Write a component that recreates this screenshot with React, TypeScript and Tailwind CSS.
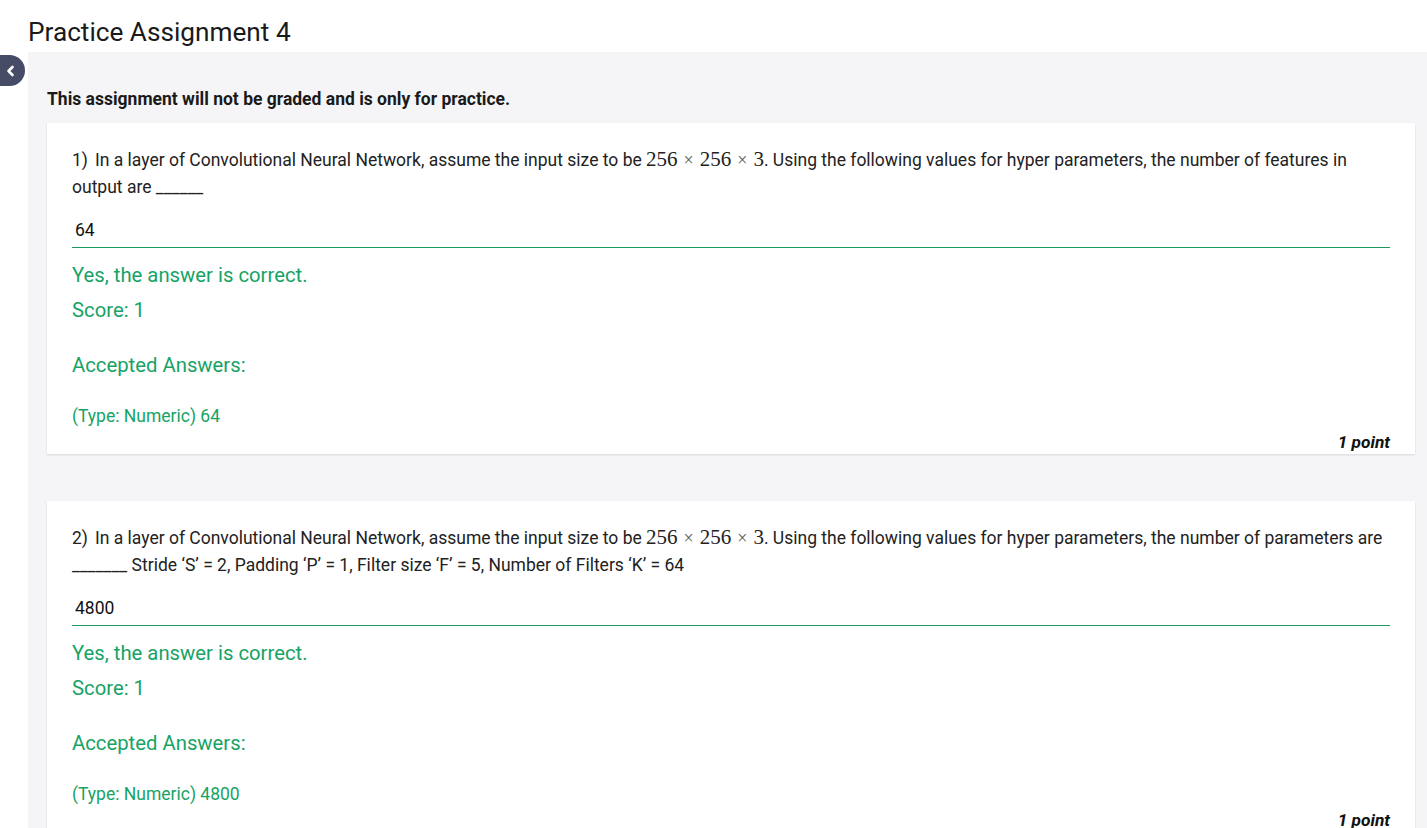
import React from "react";

const G = "text-[#17a365]";

function MathExpr() {
  return (
    <span className="font-['Liberation_Serif',serif] text-[21px] leading-none">
      256<span className="mx-[6px] text-[18px] text-[#555]">×</span>256<span className="mx-[6px] text-[18px] text-[#555]">×</span>3
    </span>
  );
}

function Card({
  n,
  second,
  answer,
}: {
  n: number;
  second: React.ReactNode;
  answer: string;
}) {
  return (
    <div className="bg-white shadow-[0_1px_2px_rgba(0,0,0,0.12)] pl-[25px] pr-[25px] pt-[24px] pb-[2px]">
      <div className="text-[17.5px] leading-[27px] text-[#222]">
        {n})<span className="ml-[7px]">In a layer of Convolutional Neural Network, assume the input size to be </span>
        <MathExpr />. Using the following values for hyper parameters, {second}
      </div>
      <div className="mt-[13px] h-[34px] border-b border-[#1f9a5f] pl-[3px] flex items-center text-[17.5px] text-[#111]">
        {answer}
      </div>
      <div className={`mt-[10px] text-[20.3px] leading-[35px] ${G}`}>Yes, the answer is correct.</div>
      <div className={`text-[20.3px] leading-[35px] ${G}`}>Score: 1</div>
      <div className={`mt-[20px] text-[20.3px] leading-[35px] ${G}`}>Accepted Answers:</div>
      <div className={`mt-[21px] text-[17.5px] leading-[24px] ${G}`}>(Type: Numeric) {answer}</div>
      <div className="mt-[4px] text-right text-[17.3px] leading-[20px] font-bold italic text-[#111]">1 point</div>
    </div>
  );
}

export default function App() {
  return (
    <div className="w-[1427px] h-[828px] overflow-hidden bg-white font-['Roboto',sans-serif]">
      <div className="h-[52px] pl-[28px] flex items-center">
        <h1 className="text-[26.2px] text-[#1a1a1a] font-normal leading-none pt-[13px]">Practice Assignment 4</h1>
      </div>
      <div className="relative ml-[28px] bg-[#f5f5f7] pl-[19px] pr-[12px] pt-[35px] pb-[40px]">
        <button className="absolute -left-[28px] top-[3px] w-[25px] h-[31px] rounded-r-full bg-[#464b66] flex items-center justify-center">
          <svg width="14" height="14" viewBox="0 0 14 14" fill="none" className="-ml-[3px]">
            <path d="M8.5 3 L4.5 7 L8.5 11" stroke="white" strokeWidth="2.6" strokeLinecap="round" strokeLinejoin="round" />
          </svg>
        </button>
        <div className="text-[17.5px] font-bold text-[#1a1a1a] leading-[24px]">
          This assignment will not be graded and is only for practice.
        </div>
        <div className="mt-[12px] flex flex-col gap-[47px]">
          <Card n={1} second={<>the number of features in output are ______</>} answer="64" />
          <Card
            n={2}
            second={<>the number of parameters are _______ Stride ‘S’ = 2, Padding ‘P’ = 1, Filter size ‘F’ = 5, Number of Filters ‘K’ = 64</>}
            answer="4800"
          />
        </div>
      </div>
    </div>
  );
}
